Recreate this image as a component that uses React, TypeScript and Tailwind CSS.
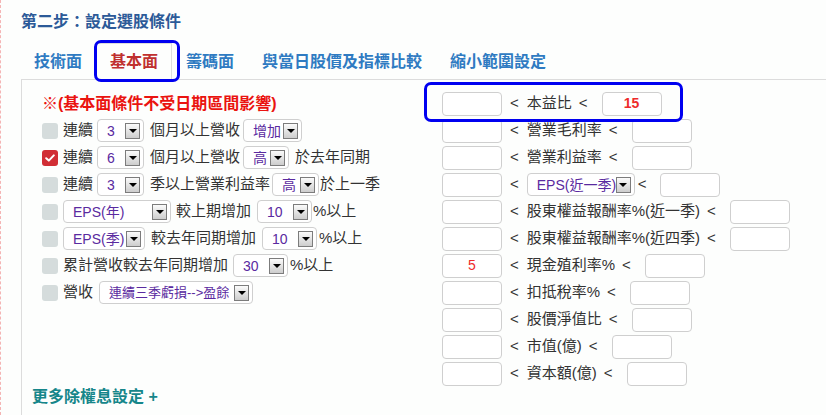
import React from "react";

const FONT = '"Liberation Sans", "Noto Sans CJK TC", sans-serif';

function Check({ on = false }: { on?: boolean }) {
  return on ? (
    <span className="w-[16px] h-[16px] shrink-0 rounded-[3px] bg-[#d12e35] flex items-center justify-center">
      <svg width="10" height="8" viewBox="0 0 10 8">
        <path d="M1.2 4.2 L3.8 6.6 L8.8 1.4" fill="none" stroke="#fff" strokeWidth="2" strokeLinecap="round" strokeLinejoin="round" />
      </svg>
    </span>
  ) : (
    <span className="w-[16px] h-[16px] shrink-0 rounded-[3px] bg-[#d5dcdc]" />
  );
}

function Sel({ v, w, className = "", small = false }: { v: string; w: number; className?: string; small?: boolean }) {
  return (
    <span
      className={"flex items-center h-[23px] shrink-0 rounded-[4px] border border-[#cfcfcf] bg-white pl-[9px] text-[#5a2aa0] " + (small ? "text-[13px] " : "text-[14px] ") + className}
      style={{ width: w }}
    >
      <span className="whitespace-nowrap leading-none">{v}</span>
      <span className="ml-auto mr-[3px] w-[15px] h-[16px] border border-[#7c7c7c] bg-linear-to-b from-[#fbfbfb] to-[#cdcdcd] flex items-center justify-center">
        <span className="w-0 h-0 border-x-[4px] border-x-transparent border-t-[4px] border-t-black" />
      </span>
    </span>
  );
}

function Inp({ v = "", bold = false, className = "" }: { v?: string; bold?: boolean; className?: string }) {
  return (
    <span className={"flex items-center justify-center w-[60px] h-[24px] shrink-0 rounded-[4px] border border-[#cfcfcf] bg-white text-[14px] text-[#ee2b2b] " + (bold ? "font-bold " : "") + className}>
      {v}
    </span>
  );
}

function Lt({ className = "" }: { className?: string }) {
  return <span className={"text-[15px] " + className}>&lt;</span>;
}

function RRow({ label, right, children }: { label?: string; right: string; children?: React.ReactNode }) {
  return (
    <div className="flex h-[27px] items-center">
      <Inp v={right === "L5" ? "5" : ""} />
      <Lt className="ml-[8px]" />
      {children ?? (
        <>
          <span className="ml-[8px] whitespace-nowrap">{label}</span>
          <Lt className="ml-[7px]" />
        </>
      )}
      <Inp v={right === "R15" ? "15" : ""} bold className={children ? "ml-[13px]" : "ml-[14px]"} />
    </div>
  );
}

export default function App() {
  const tab = "px-[14px] h-full flex items-center text-[16px] font-bold text-[#2f7bc2] whitespace-nowrap";
  return (
    <div
      className="w-[826px] h-[415px] overflow-hidden relative bg-[#fdfefd] border-l border-dashed border-[#f4b4b4] text-[#333] text-[15px]"
      style={{ fontFamily: FONT }}
    >
      <div className="pt-[12px] pl-[20px] h-[32px] leading-[20px] text-[16px] font-bold text-[#2c5a98]">第二步：設定選股條件</div>

      <div className="flex items-end h-[37px] mt-[11px] ml-[19px] relative z-10 -mb-px">
        <div className={tab}>技術面</div>
        <div className="px-[13px] h-full flex items-center text-[16px] font-bold text-[#c0302f] bg-[#fdfefd] border border-[#dcdcdc] border-b-[#fdfefd]">基本面</div>
        <div className={tab}>籌碼面</div>
        <div className={tab}>與當日股價及指標比較</div>
        <div className={tab}>縮小範圍設定</div>
      </div>

      <div className="ml-[20px] w-[900px] h-[400px] border-t border-l border-[#dcdcdc] pt-[10px] pl-[10px]">
        <div className="flex ml-[10px]">
          <div className="w-[400px] shrink-0">
            <div className="h-[27px] flex items-center text-[16px] font-bold text-[#ea1410]">※(基本面條件不受日期區間影響)</div>
            <div className="flex h-[27px] items-center whitespace-nowrap">
              <Check />
              <span className="ml-[5px]">連續</span>
              <Sel v="3" w={47} className="ml-[4px]" />
              <span className="ml-[6px]">個月以上營收</span>
              <Sel v="增加" w={59} className="ml-[3px]" />
            </div>
            <div className="flex h-[27px] items-center whitespace-nowrap">
              <Check on />
              <span className="ml-[5px]">連續</span>
              <Sel v="6" w={47} className="ml-[4px]" />
              <span className="ml-[6px]">個月以上營收</span>
              <Sel v="高" w={46} className="ml-[3px]" />
              <span className="ml-[6px]">於去年同期</span>
            </div>
            <div className="flex h-[27px] items-center whitespace-nowrap">
              <Check />
              <span className="ml-[5px]">連續</span>
              <Sel v="3" w={47} className="ml-[4px]" />
              <span className="ml-[6px]">季以上營業利益率</span>
              <Sel v="高" w={47} className="ml-[2px]" />
              <span className="ml-[1px]">於上一季</span>
            </div>
            <div className="flex h-[27px] items-center whitespace-nowrap">
              <Check />
              <Sel v="EPS(年)" w={108} className="ml-[5px]" />
              <span className="ml-[5px]">較上期增加</span>
              <Sel v="10" w={55} className="ml-[6px]" />
              <span className="ml-[1px]">%以上</span>
            </div>
            <div className="flex h-[27px] items-center whitespace-nowrap">
              <Check />
              <Sel v="EPS(季)" w={82} className="ml-[5px]" />
              <span className="ml-[6px]">較去年同期增加</span>
              <Sel v="10" w={55} className="ml-[6px]" />
              <span className="ml-[2px]">%以上</span>
            </div>
            <div className="flex h-[27px] items-center whitespace-nowrap">
              <Check />
              <span className="ml-[5px]">累計營收較去年同期增加</span>
              <Sel v="30" w={55} className="ml-[5px]" />
              <span className="ml-[2px]">%以上</span>
            </div>
            <div className="flex h-[27px] items-center whitespace-nowrap">
              <Check />
              <span className="ml-[5px]">營收</span>
              <Sel v="連續三季虧損-->盈餘" w={154} small className="ml-[6px]" />
            </div>
          </div>

          <div className="shrink-0">
            <RRow label="本益比" right="R15" />
            <RRow label="營業毛利率" right="" />
            <RRow label="營業利益率" right="" />
            <RRow right="">
              <Sel v="EPS(近一季)" w={108} className="ml-[8px]" />
              <Lt className="ml-[3px]" />
            </RRow>
            <RRow label="股東權益報酬率%(近一季)" right="" />
            <RRow label="股東權益報酬率%(近四季)" right="" />
            <RRow label="現金殖利率%" right="L5" />
            <RRow label="扣抵稅率%" right="" />
            <RRow label="股價淨值比" right="" />
            <RRow label="市值(億)" right="" />
            <RRow label="資本額(億)" right="" />
          </div>
        </div>
        <div className="h-[20px] flex items-center text-[16px] font-bold text-[#16868a]">更多除權息設定 +</div>
      </div>

      <div className="absolute left-[93px] top-[40px] w-[86px] h-[42px] border-[3px] border-[#0000f0] rounded-[7px] z-20" />
      <div className="absolute left-[423px] top-[82px] w-[259px] h-[40px] border-[3px] border-[#0000f0] rounded-[7px] z-20" />
    </div>
  );
}
